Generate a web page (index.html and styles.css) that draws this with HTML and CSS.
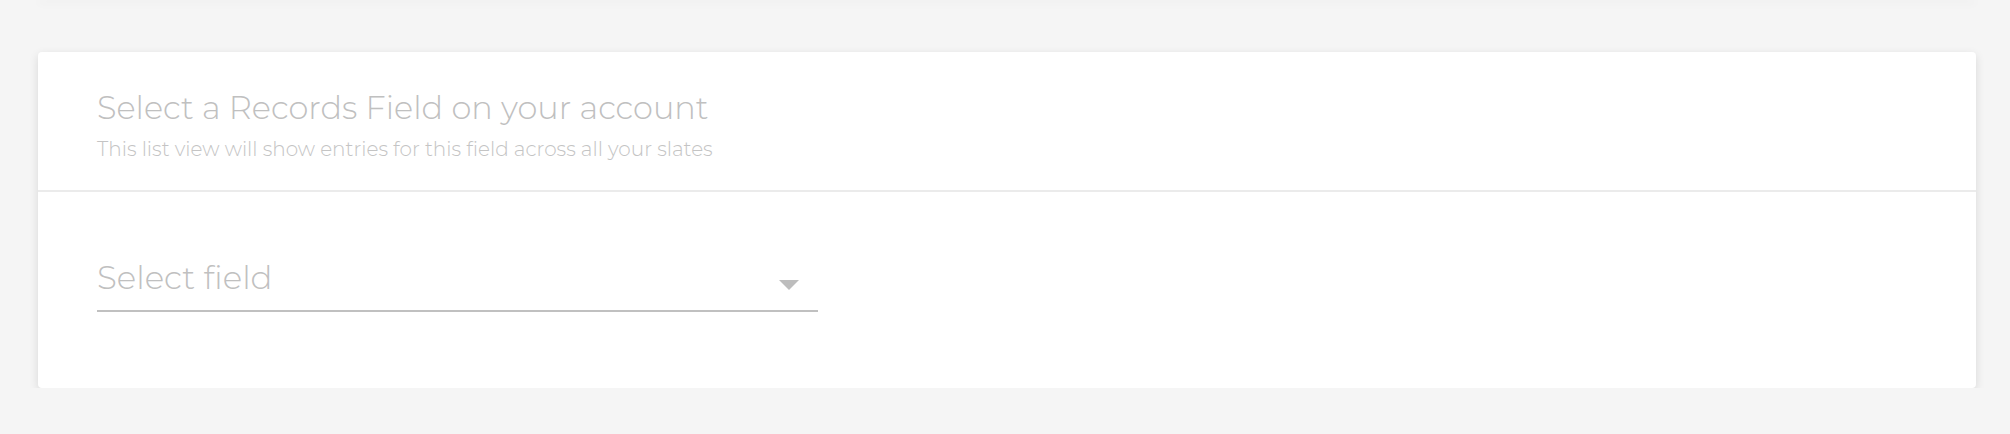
FILE: index.html
```html
<!DOCTYPE html>
<html lang="en">
<head>
<meta charset="utf-8">
<title>Records Field</title>
<link rel="stylesheet" href="styles.css">
</head>
<body>
<div class="page">
  <div class="card card--prev"></div>
  <section class="card">
    <header class="card__header">
      <h2 class="card__title">Select a Records Field on your account</h2>
      <p class="card__subtitle">This list view will show entries for this field across all your slates</p>
    </header>
    <div class="card__body">
      <div class="select">
        <span class="select__placeholder">Select field</span>
        <span class="select__arrow"></span>
      </div>
    </div>
  </section>
</div>
</body>
</html>
```

FILE: styles.css
```css
html, body {
  margin: 0;
  padding: 0;
  background: #f5f5f5;
  font-family: Montserrat, Inter, "Noto Sans", sans-serif;
}

.page {
  display: flex;
  flex-direction: column;
  gap: 52px;
  padding: 0 34px 0 38px;
}

.card {
  background: #fff;
  border-radius: 4px;
  box-shadow: 0 3px 10px rgba(0, 0, 0, 0.12);
}

.card--prev {
  height: 1px;
  margin-top: -1px;
  border-radius: 0;
  box-shadow: 0 2px 10px rgba(0, 0, 0, 0.14);
}

.card__header {
  padding: 36px 59px 29px;
  border-bottom: 2px solid #ebebeb;
}

.card__title {
  margin: 0;
  font-size: 32px;
  line-height: 40px;
  font-weight: 300;
  color: #c0c0c0;
}

.card__subtitle {
  margin: 9px 0 0;
  font-size: 20px;
  line-height: 24px;
  font-weight: 300;
  color: #c4c4c4;
}

.card__body {
  padding: 66px 59px 76px;
}

.select {
  width: 721px;
  display: flex;
  align-items: center;
  justify-content: space-between;
  padding-bottom: 12px;
  border-bottom: 2px solid #c0c0c0;
}

.select__placeholder {
  font-size: 32.5px;
  line-height: 40px;
  font-weight: 300;
  color: #c0c0c0;
}

.select__arrow {
  width: 0;
  height: 0;
  margin-right: 19px;
  margin-top: 14px;
  border-left: 10px solid transparent;
  border-right: 10px solid transparent;
  border-top: 10px solid #bdbdbd;
}
```
